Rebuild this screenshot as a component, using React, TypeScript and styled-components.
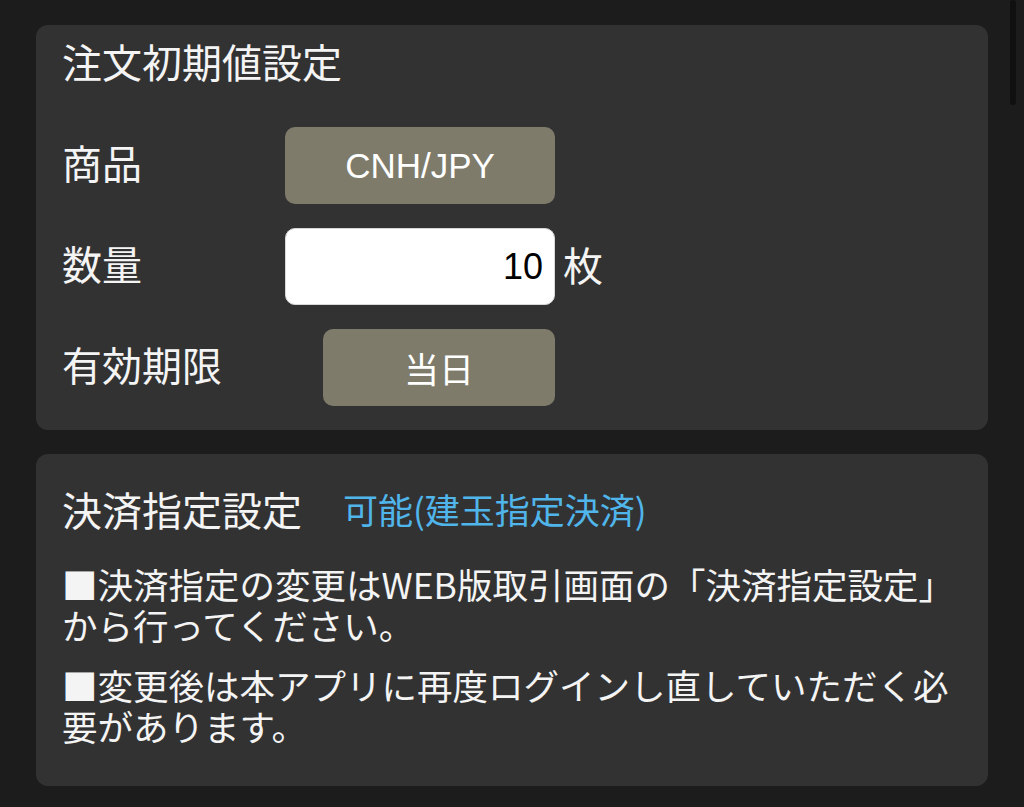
import React from "react";
import styled, { createGlobalStyle } from "styled-components";

const GlobalStyle = createGlobalStyle`
  html, body {
    margin: 0;
    padding: 0;
    background: #1c1c1c;
  }
  body {
    font-family: "Noto Sans CJK JP", "Noto Sans", sans-serif;
    color: #f2f2f2;
  }
  * { box-sizing: border-box; }
`;

const Page = styled.div`
  position: relative;
  min-height: 807px;
  padding: 25px 36px 21px;
  display: flex;
  flex-direction: column;
  gap: 24px;
  background: #1c1c1c;
`;

const ScrollThumb = styled.div`
  position: absolute;
  top: 0;
  left: 1010px;
  width: 6px;
  height: 105px;
  border-radius: 3px;
  background: #101010;
`;

const Card = styled.section<{ $pad: string }>`
  background: #323232;
  border-radius: 12px;
  padding: ${(p) => p.$pad};
  display: flex;
  flex-direction: column;
`;

const Title = styled.h2`
  margin: 0;
  font-size: 40px;
  line-height: 48px;
  font-weight: 400;
  color: #f4f4f4;
  white-space: nowrap;
`;

const Rows = styled.div`
  margin-top: 42px;
  display: flex;
  flex-direction: column;
  gap: 24px;
`;

const Row = styled.div`
  display: flex;
  align-items: center;
  height: 77px;
`;

const Label = styled.div`
  width: 223px;
  margin-bottom: 7px;
  font-size: 40px;
  line-height: 48px;
  color: #f4f4f4;
`;

const Control = styled.div`
  width: 270px;
  display: flex;
  justify-content: flex-end;
`;

const SelectButton = styled.button<{ $width: number; $latin?: boolean }>`
  width: ${(p) => p.$width}px;
  height: 77px;
  border: none;
  border-radius: 10px;
  background: #7e7b6b;
  color: #ffffff;
  font-family: ${(p) =>
    p.$latin
      ? `"Liberation Sans", Arial, sans-serif`
      : `"Noto Sans CJK JP", sans-serif`};
  font-size: 35px;
  padding: 0;
  display: flex;
  align-items: center;
  justify-content: center;
`;

const NumberBox = styled.div`
  width: 270px;
  height: 77px;
  border-radius: 10px;
  background: #ffffff;
  border: 1px solid #d8d8d8;
  color: #000;
  font-family: "Liberation Sans", Arial, sans-serif;
  font-size: 36px;
  display: flex;
  align-items: center;
  justify-content: flex-end;
  padding-right: 11px;
`;

const Unit = styled.span`
  margin-left: 8px;
  margin-bottom: 5px;
  font-size: 40px;
  line-height: 48px;
  color: #f4f4f4;
`;

const TitleLine = styled.div`
  display: flex;
  align-items: center;
  gap: 41px;
`;

const Status = styled.span`
  font-size: 35px;
  line-height: 48px;
  color: #50b5ea;
  white-space: nowrap;
`;

const Notes = styled.div`
  margin-top: 30px;
  display: flex;
  flex-direction: column;
  gap: 19px;
`;

const Note = styled.p`
  margin: 0;
  font-size: 35.5px;
  line-height: 41px;
  color: #f4f4f4;
`;

export default function App() {
  return (
    <>
      <GlobalStyle />
      <Page>
        <ScrollThumb />
        <Card $pad="12px 26px 24px">
          <Title>注文初期値設定</Title>
          <Rows>
            <Row>
              <Label>商品</Label>
              <Control>
                <SelectButton $width={270} $latin>
                  CNH/JPY
                </SelectButton>
              </Control>
            </Row>
            <Row>
              <Label>数量</Label>
              <NumberBox>10</NumberBox>
              <Unit>枚</Unit>
            </Row>
            <Row>
              <Label>有効期限</Label>
              <Control>
                <SelectButton $width={232}>当日</SelectButton>
              </Control>
            </Row>
          </Rows>
        </Card>
        <Card $pad="31px 26px 40px">
          <TitleLine>
            <Title>決済指定設定</Title>
            <Status>可能(建玉指定決済)</Status>
          </TitleLine>
          <Notes>
            <Note>■決済指定の変更はWEB版取引画面の「決済指定設定」から行ってください。</Note>
            <Note>■変更後は本アプリに再度ログインし直していただく必要があります。</Note>
          </Notes>
        </Card>
      </Page>
    </>
  );
}
